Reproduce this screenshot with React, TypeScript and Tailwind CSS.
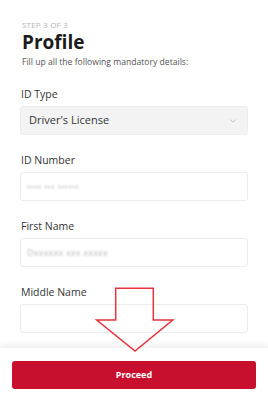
import { ChevronDown } from 'lucide-react';

const fields = [
    { label: 'ID Number', value: '•••• ••• ••••••' },
    { label: 'First Name', value: 'Dxxxxxx xxx xxxxx' },
    { label: 'Middle Name', value: '' },
];

export default function App() {
    return (
        <div className="relative h-[400px] w-[268px] overflow-hidden bg-white flex flex-col font-['Open_Sans',sans-serif]">
            {/* Scrollable form */}
            <div className="flex-1 overflow-hidden px-5 pt-[19px]">
                <p className="text-[8px] leading-[11px] tracking-wide text-[#b5b5b5] pl-[2px]">STEP 3 OF 3</p>
                <h1 className="text-[19px] leading-[25px] font-bold text-[#1c1c1c] pl-[2px]">Profile</h1>
                <p className="mt-[1px] text-[8.6px] leading-[12px] text-[#555] pl-[2px]">
                    Fill up all the following mandatory details:
                </p>

                <div className="mt-[19px] flex flex-col gap-[18px]">
                    <div>
                        <label className="block text-[10.5px] leading-[14px] text-[#333] mb-[5px] pl-[1px]">ID Type</label>
                        <div className="h-[29px] flex items-center justify-between rounded-[3px] bg-[#f3f3f3] border border-[#ededed] pl-[8px] pr-[9px]">
                            <span className="text-[11px] text-[#333]">Driver's License</span>
                            <ChevronDown className="w-[10px] h-[10px] text-[#b8b8b8]" strokeWidth={2} />
                        </div>
                    </div>

                    {fields.map(field => (
                        <div key={field.label}>
                            <label className="block text-[10.5px] leading-[14px] text-[#333] mb-[5px] pl-[1px]">{field.label}</label>
                            <div className="h-[29px] flex items-center rounded-[3px] bg-white border border-[#ececec] pl-[6px]">
                                <span className="text-[9px] text-[#b9b9b9] blur-[0.8px] tracking-wide">{field.value}</span>
                            </div>
                        </div>
                    ))}
                </div>
            </div>

            {/* Bottom action bar */}
            <div className="h-[52px] shrink-0 bg-white px-3 pt-3 shadow-[0_-4px_6px_rgba(0,0,0,0.06)] z-10">
                <button className="w-full h-[28px] rounded-[3px] bg-[#c8102e] text-white text-[9px] font-bold">
                    Proceed
                </button>
            </div>

            {/* Annotation arrow */}
            <svg className="absolute left-0 top-0 z-20 pointer-events-none" width="268" height="400" viewBox="0 0 268 400">
                <polygon
                    points="115.7,288.3 153.3,288.3 153.3,320 172.7,320 135,351 96.7,320 115.7,320"
                    fill="none"
                    stroke="#e8323c"
                    strokeWidth="1.5"
                    strokeLinejoin="miter"
                />
            </svg>
        </div>
    );
}
